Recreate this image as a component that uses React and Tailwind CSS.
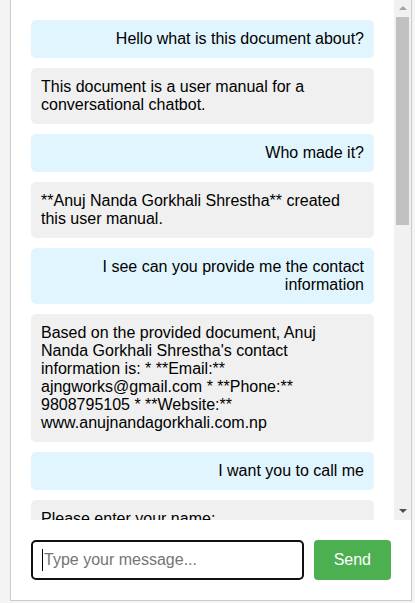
import React, { useState } from 'react'

const MESSAGES = [
  { from: 'user', text: 'Hello what is this document about?' },
  { from: 'bot', text: 'This document is a user manual for a conversational chatbot.' },
  { from: 'user', text: 'Who made it?' },
  { from: 'bot', text: '**Anuj Nanda Gorkhali Shrestha** created this user manual.' },
  { from: 'user', text: 'I see can you provide me the contact information' },
  {
    from: 'bot',
    text: "Based on the provided document, Anuj Nanda Gorkhali Shrestha's contact information is: * **Email:** ajngworks@gmail.com * **Phone:** 9808795105 * **Website:** www.anujnandagorkhali.com.np",
  },
  { from: 'user', text: 'I want you to call me' },
  { from: 'bot', text: 'Please enter your name:' },
  { from: 'user', text: 'Anuj' },
  { from: 'bot', text: 'Please enter your phone number:' },
]

function Bubble({ from, text }) {
  const isUser = from === 'user'
  return (
    <div
      className={`shrink-0 rounded-[5px] p-[10px] text-[16px] leading-[18px] text-black ${
        isUser ? 'bg-[#e1f5fe] text-right' : 'bg-[#f0f0f0] text-left'
      }`}
    >
      {text}
    </div>
  )
}

function Scrollbar() {
  return (
    <div className="flex w-[17px] shrink-0 flex-col bg-[#f1f1f1]">
      <div className="flex h-[17px] items-center justify-center">
        <span className="mt-[-1px] h-0 w-0 border-x-[4px] border-b-[4px] border-x-transparent border-b-[#a3a3a3]" />
      </div>
      <div className="mx-[2px] h-[208px] bg-[#c1c1c1]" />
      <div className="flex-1" />
      <div className="flex h-[17px] items-center justify-center">
        <span className="mt-[-1px] h-0 w-0 border-x-[4px] border-t-[4px] border-x-transparent border-t-[#505050]" />
      </div>
    </div>
  )
}

export default function App() {
  const [value, setValue] = useState('')

  return (
    <div className="h-[603px] overflow-hidden bg-[#f4f4f4] pl-[10px] font-['Liberation_Sans',Arial,sans-serif]">
      <div className="flex h-[601px] w-[402px] flex-col border-x border-b border-[#cccccc] bg-white">
        <div className="flex min-h-0 flex-1">
          <div className="flex min-w-0 flex-1 flex-col gap-[10px] overflow-hidden p-5">
            {MESSAGES.map((m, i) => (
              <Bubble key={i} from={m.from} text={m.text} />
            ))}
          </div>
          <Scrollbar />
        </div>
        <div className="flex h-[80px] shrink-0 gap-[10px] p-5">
          <div className="relative flex min-w-0 flex-1">
            <input
              value={value}
              onChange={(e) => setValue(e.target.value)}
              placeholder="Type your message..."
              className="h-10 min-w-0 flex-1 rounded-[5px] border-2 border-[#101010] px-[11px] text-[16px] text-black outline-none placeholder:text-[#757575]"
            />
            {/* text caret */}
            <span className="pointer-events-none absolute left-[11px] top-[9px] h-[22px] w-px bg-black" />
          </div>
          <button
            type="button"
            className="h-10 rounded-[4px] bg-[#4caf50] px-5 text-[16px] text-white"
          >
            Send
          </button>
        </div>
      </div>
    </div>
  )
}
